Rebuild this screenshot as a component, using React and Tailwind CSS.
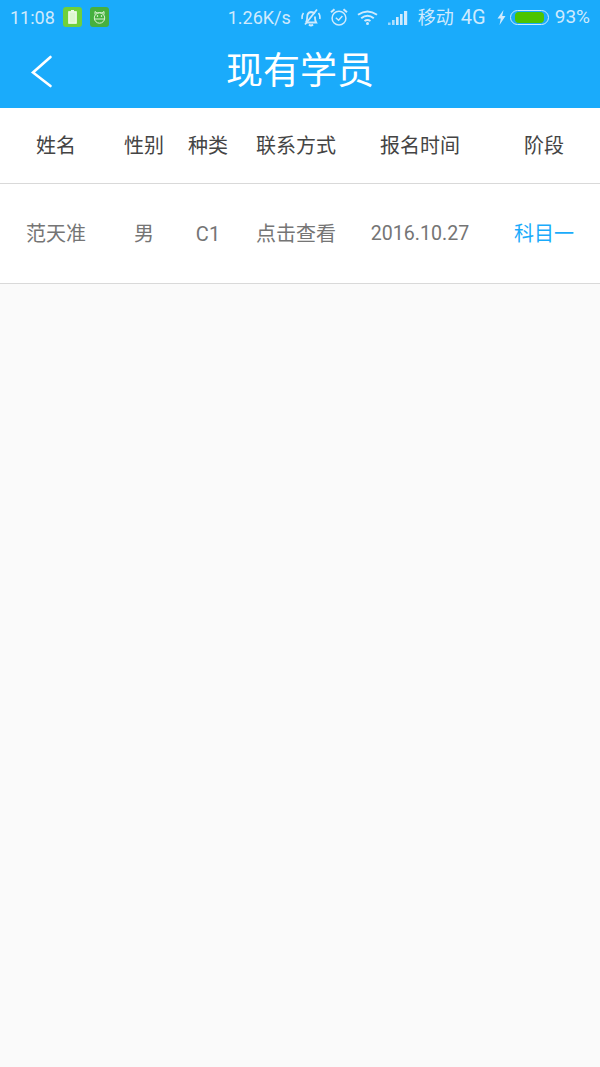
const FONT = "font-['Roboto','Noto_Sans_CJK_SC',sans-serif]";

const BatteryBadge = () => (
  <div className="w-[19px] h-[20px] rounded-[3px] bg-[#6fd03c] flex items-center justify-center">
    <svg width="9" height="14" viewBox="0 0 9 14">
      <rect x="3" y="0" width="3" height="1.5" fill="#f2fce8" />
      <rect x="0.8" y="1.8" width="7.4" height="11.4" fill="#dff6cf" stroke="#f6fdf0" strokeWidth="1.2" />
    </svg>
  </div>
);

const CatBadge = () => (
  <div className="w-[19px] h-[20px] rounded-[3px] bg-[#46b03e] flex items-center justify-center">
    <svg width="15" height="14" viewBox="0 0 15 14" fill="none" stroke="#d9f3d2" strokeWidth="1">
      <path d="M3 4.5 L3 1.5 L5 3 Q7.5 2.2 10 3 L12 1.5 L12 4.5" />
      <circle cx="7.5" cy="8" r="5.2" />
      <path d="M2.6 9 H12.4" />
      <circle cx="5.5" cy="6" r="0.5" fill="#d9f3d2" />
      <circle cx="9.5" cy="6" r="0.5" fill="#d9f3d2" />
    </svg>
  </div>
);

const MuteBell = () => (
  <svg width="20" height="19" viewBox="0 0 20 19" fill="none" stroke="#cfeafd" strokeWidth="1.8">
    <path d="M5 14.5 Q6.2 12.5 6.2 9 Q6.2 4.5 10 4 Q12.5 4 13.5 6 M14 8.5 V10 Q14 12.5 15.2 14.5 H5" />
    <path d="M8 16.5 Q10 18.5 12 16.5" />
    <path d="M4 16.5 L16 1.5" />
    <path d="M1.2 11 Q0.6 7.5 2.5 5 M18.8 11 Q19.4 7.5 17.5 5" strokeWidth="1.6" />
  </svg>
);

const Alarm = () => (
  <svg width="18" height="18" viewBox="0 0 18 18" fill="none" stroke="#cfeafd" strokeWidth="1.5">
    <circle cx="9" cy="10.2" r="6.9" />
    <path d="M5.8 9.8 L8.6 12.2 L12.4 8" />
    <path d="M1 4.2 L4.5 1.2 M17 4.2 L13.5 1.2" strokeWidth="2" />
  </svg>
);

const Wifi = () => (
  <svg width="21" height="15" viewBox="0 0 21 15" fill="none" stroke="#cfeafd" strokeWidth="2">
    <path d="M1 4.8 Q10.5 -2 20 4.8" />
    <path d="M4.2 8.2 Q10.5 3.2 16.8 8.2" />
    <path d="M7.5 11 Q10.5 9 13.5 11" />
    <circle cx="10.5" cy="13.5" r="1.5" fill="#cfeafd" stroke="none" />
  </svg>
);

const Signal = () => (
  <svg width="20" height="15" viewBox="0 0 20 15" fill="#cfeafd">
    <rect x="0" y="12.5" width="2.6" height="2.5" opacity="0.7" />
    <rect x="4" y="10" width="2.6" height="5" opacity="0.8" />
    <rect x="8" y="7" width="2.6" height="8" />
    <rect x="12" y="4" width="2.6" height="11" />
    <rect x="16" y="1" width="3.2" height="14" />
  </svg>
);

const Battery = () => (
  <div className="flex items-center gap-[4px]">
    <svg width="9" height="15" viewBox="0 0 9 15" fill="#cfeafd">
      <path d="M6.5 0 L0.5 8.5 H3.8 L2.5 15 L8.5 6 H5.2 Z" />
    </svg>
    <div className="w-[39px] h-[15px] rounded-full border border-[#cfeafd] px-[4px] py-[1px] flex">
      <div className="flex-1 rounded-[4px] bg-[#4cc400]" />
    </div>
  </div>
);

const StatusBar = () => (
  <div className="h-[34px] pl-[10px] pr-[10px] flex items-center justify-between text-[#cfeafd] text-[18px]">
    <div className="flex items-center">
      <span className="w-[53px]">11:08</span>
      <BatteryBadge />
      <div className="w-[8px]" />
      <CatBadge />
    </div>
    <div className="flex items-center">
      <span className="mr-[10px]">1.26K/s</span>
      <MuteBell />
      <div className="w-[9px]" />
      <Alarm />
      <div className="w-[9px]" />
      <Wifi />
      <div className="w-[10px]" />
      <Signal />
      <span className="ml-[10px]">移动</span>
      <span className="ml-[7px] text-[20px]">4G</span>
      <div className="ml-[11px]"><Battery /></div>
      <span className="ml-[6px] text-[19px]">93%</span>
    </div>
  </div>
);

const columns = [
  { label: "姓名", value: "范天准", width: "w-[112px]" },
  { label: "性别", value: "男", width: "w-[64px]" },
  { label: "种类", value: "C1", width: "w-[64px]" },
  { label: "联系方式", value: "点击查看", width: "w-[112px]" },
  { label: "报名时间", value: "2016.10.27", width: "w-[136px]", size: "text-[19.6px]" },
  { label: "阶段", value: "科目一", width: "w-[112px]", accent: true },
];

const App = () => {
  return (
    <div className={`min-h-[1067px] bg-[#fafafa] ${FONT}`}>
      {/* Header */}
      <div className="bg-[#1aabfb] h-[108px]">
        <StatusBar />
        <div className="relative h-[74px] flex items-center justify-center">
          <svg className="absolute left-[30px] top-[20px]" width="24" height="34" viewBox="0 0 24 34" fill="none" stroke="#ffffff" strokeWidth="2.6" strokeLinecap="round">
            <path d="M20.5 3 L3 18.5 L20.5 32" />
          </svg>
          <h1 className="text-white text-[37px] leading-none">现有学员</h1>
        </div>
      </div>

      {/* Table */}
      <div className="bg-white">
        <div className="flex items-center h-[76px] border-b border-[#d9d9d9] text-[#444444] text-[20px]">
          {columns.map((c) => (
            <div key={c.label} className={`${c.width} text-center`}>{c.label}</div>
          ))}
        </div>
        <div className="flex items-center h-[100px] border-b border-[#d9d9d9] text-[#757575] text-[20px]">
          {columns.map((c) => (
            <div key={c.label} className={`${c.width} text-center ${c.size || ""} ${c.accent ? "text-[#1aabfb]" : ""}`}>{c.value}</div>
          ))}
        </div>
      </div>
    </div>
  );
};

export default App;
